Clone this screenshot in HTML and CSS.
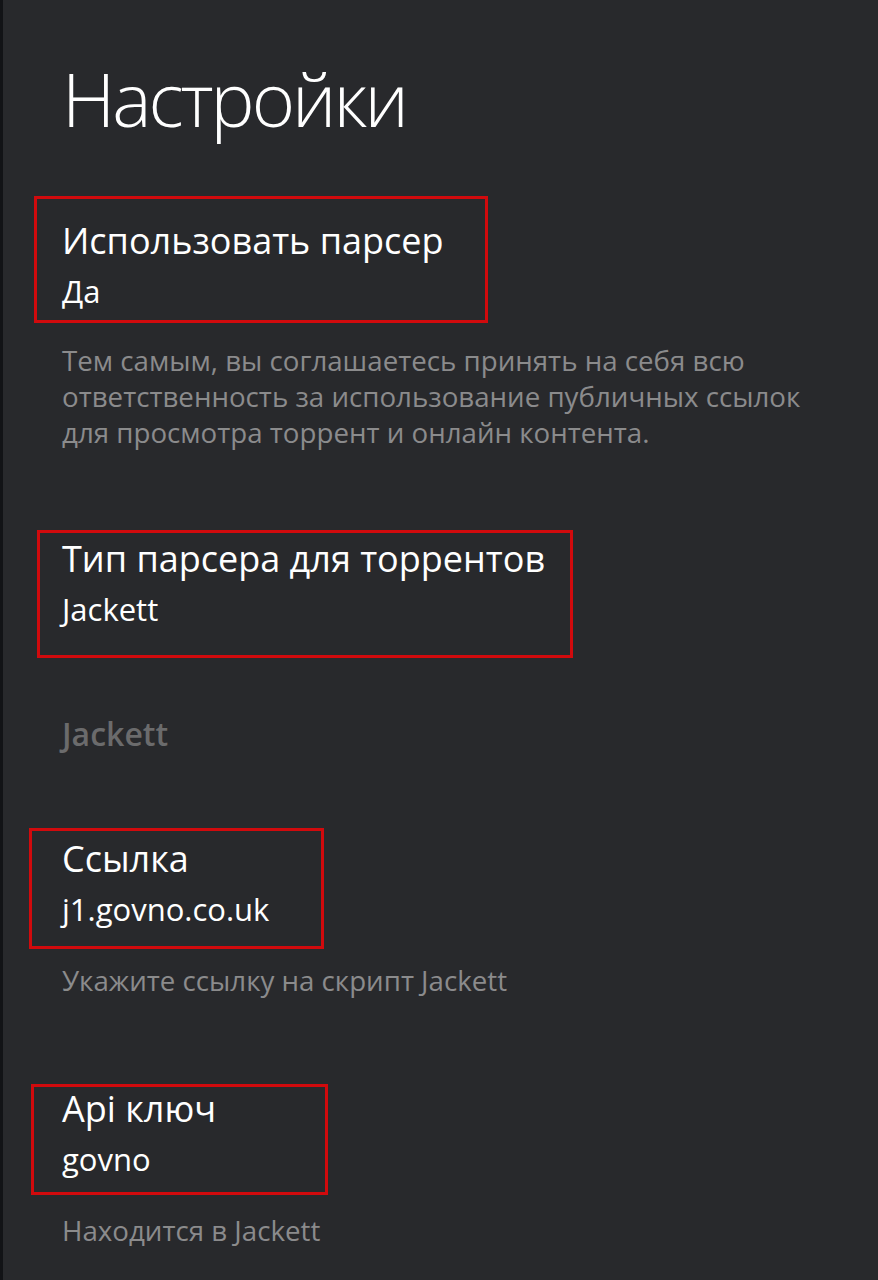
FILE: index.html
```html
<!DOCTYPE html>
<html lang="ru">
<head>
<meta charset="utf-8">
<title>Настройки</title>
<link rel="stylesheet" href="styles.css">
</head>
<body>
<div class="page">
  <main class="settings">
    <h1 class="page-title">Настройки</h1>

    <div class="setting box box-1">
      <div class="setting-name">Использовать парсер</div>
      <div class="setting-value">Да</div>
    </div>
    <p class="hint hint-1">Тем самым, вы соглашаетесь принять на себя всю ответственность за использование публичных ссылок для просмотра торрент и онлайн контента.</p>

    <div class="setting box box-2">
      <div class="setting-name">Тип парсера для торрентов</div>
      <div class="setting-value">Jackett</div>
    </div>

    <h2 class="section-title">Jackett</h2>

    <div class="setting box box-3">
      <div class="setting-name">Ссылка</div>
      <div class="setting-value">j1.govno.co.uk</div>
    </div>
    <p class="hint hint-3">Укажите ссылку на скрипт Jackett</p>

    <div class="setting box box-4">
      <div class="setting-name">Api ключ</div>
      <div class="setting-value">govno</div>
    </div>
    <p class="hint hint-4">Находится в Jackett</p>
  </main>
</div>
</body>
</html>
```

FILE: styles.css
```css
html, body {
  margin: 0;
  padding: 0;
  background: #28292c;
}

body {
  font-family: "Open Sans", "Noto Sans", "DejaVu Sans", sans-serif;
  color: #ffffff;
}

.page {
  min-height: 1280px;
  border-left: 3px solid #121316;
  box-sizing: border-box;
}

.settings {
  display: flex;
  flex-direction: column;
  align-items: flex-start;
  padding-left: 59px;
}

.page-title {
  margin: 62px 0 0;
  font-size: 74px;
  line-height: 74px;
  font-weight: 300;
  letter-spacing: -3px;
}

.box {
  border: 3px solid #d10a0d;
  box-sizing: border-box;
}

.setting-name {
  font-size: 36px;
  line-height: 44px;
  font-weight: 400;
}

.setting-value {
  margin-top: 10px;
  font-size: 31px;
  line-height: 36px;
  font-weight: 400;
}

.hint {
  margin: 0;
  font-size: 27.7px;
  line-height: 36px;
  color: #8b8b8c;
  max-width: 780px;
}

.section-title {
  margin: 56px 0 0;
  font-size: 32px;
  line-height: 40px;
  font-weight: 600;
  color: #6b6b6c;
}

.box-1 {
  margin: 60px 0 0 -28px;
  padding: 20px 0 11px 25px;
  width: 454px;
}

.hint-1 {
  margin-top: 19px;
}

.box-2 {
  margin: 80px 0 0 -25px;
  padding: 4px 0 28px 22px;
  width: 536px;
}

.box-3 {
  margin: 74px 0 0 -33px;
  padding: 6px 0 19px 30px;
  width: 295px;
}

.hint-3 {
  margin-top: 13px;
}

.box-4 {
  margin: 86px 0 0 -31px;
  padding: 0 0 15px 28px;
  width: 297px;
}

.hint-4 {
  margin-top: 17px;
}
```
